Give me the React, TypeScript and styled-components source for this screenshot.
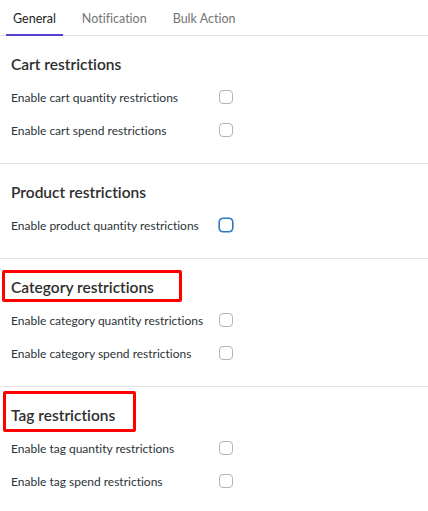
import React from "react";
import styled, { createGlobalStyle } from "styled-components";

const Global = createGlobalStyle`
  html, body { margin: 0; padding: 0; background: #ffffff; }
  body {
    font-family: Lato, "Liberation Sans", Arial, sans-serif;
    color: #2c3338;
    font-variant-ligatures: none;
    font-feature-settings: "liga" 0, "clig" 0;
  }
  * { box-sizing: border-box; }
`;

const Page = styled.div`
  width: 428px;
  background: #fff;
`;

const TabBar = styled.div`
  display: flex;
  gap: 12px;
  height: 36px;
  padding-left: 6px;
  box-shadow: inset 0 -1px 0 #e2e2e2;
`;

const Tab = styled.div<{ $active?: boolean }>`
  display: flex;
  align-items: center;
  height: 36px;
  padding: 2px 7px 0;
  font-size: 12.5px;
  color: ${(p) => (p.$active ? "#1e1e1e" : "#757575")};
  border-bottom: 2px solid ${(p) => (p.$active ? "#5b3fd1" : "transparent")};
`;

const Section = styled.section<{ $last?: boolean }>`
  padding: 16px 0 16px;
  border-bottom: ${(p) => (p.$last ? "none" : "1px solid #e2e2e2")};
`;

const HeadingWrap = styled.div`
  position: relative;
  display: inline-block;
  margin-left: 11px;
  margin-bottom: 5px;
`;

const Heading = styled.h2`
  margin: 0;
  height: 24px;
  line-height: 24px;
  font-size: 15.5px;
  font-weight: 600;
  color: #2e2e2e;
`;

const Highlight = styled.span<{ $top: number; $bottom: number; $left: number; $right: number }>`
  position: absolute;
  top: ${(p) => p.$top}px;
  bottom: ${(p) => p.$bottom}px;
  left: ${(p) => p.$left}px;
  right: ${(p) => p.$right}px;
  border: 3px solid #ff0000;
  border-radius: 2px;
  pointer-events: none;
`;

const Row = styled.label`
  display: flex;
  align-items: center;
  height: 33px;
  padding-left: 11px;
`;

const Label = styled.span`
  width: 208px;
  font-size: 12px;
  color: #2c3338;
`;

const Box = styled.span<{ $focused?: boolean }>`
  display: inline-block;
  width: 14px;
  height: 14px;
  margin-top: -1px;
  border-radius: 4px;
  border: 1px solid ${(p) => (p.$focused ? "#2f74c0" : "#b4b4b4")};
  box-shadow: ${(p) => (p.$focused ? "0 0 0 0.6px #2f74c0" : "none")};
  background: #fff;
`;

type Sec = {
  title: string;
  rows: string[];
  focused?: number;
  hl?: { top: number; bottom: number; left: number; right: number };
};

const sections: Sec[] = [
  { title: "Cart restrictions", rows: ["Enable cart quantity restrictions", "Enable cart spend restrictions"] },
  { title: "Product restrictions", rows: ["Enable product quantity restrictions"], focused: 0 },
  {
    title: "Category restrictions",
    rows: ["Enable category quantity restrictions", "Enable category spend restrictions"],
    hl: { top: -5, bottom: -3, left: -9, right: -28 },
  },
  {
    title: "Tag restrictions",
    rows: ["Enable tag quantity restrictions", "Enable tag spend restrictions"],
    hl: { top: -12, bottom: -5, left: -8, right: -21 },
  },
];

export default function App() {
  return (
    <Page>
      <Global />
      <TabBar>
        <Tab $active>General</Tab>
        <Tab>Notification</Tab>
        <Tab>Bulk Action</Tab>
      </TabBar>
      {sections.map((s, i) => (
        <Section key={s.title} $last={i === sections.length - 1}>
          <HeadingWrap>
            <Heading>{s.title}</Heading>
            {s.hl && <Highlight $top={s.hl.top} $bottom={s.hl.bottom} $left={s.hl.left} $right={s.hl.right} />}
          </HeadingWrap>
          {s.rows.map((r, j) => (
            <Row key={r}>
              <Label>{r}</Label>
              <Box $focused={s.focused === j} />
            </Row>
          ))}
        </Section>
      ))}
    </Page>
  );
}
